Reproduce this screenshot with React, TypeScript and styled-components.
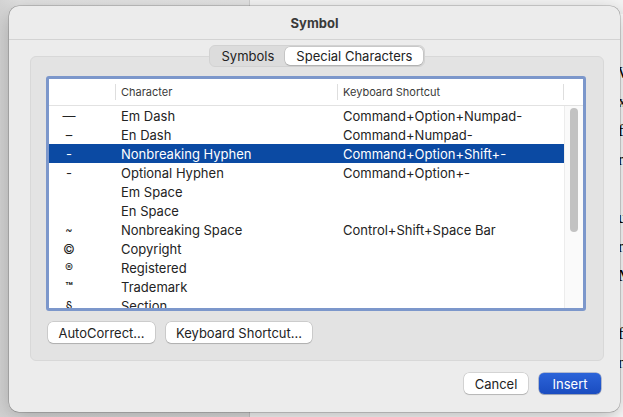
import React from "react";
import styled, { createGlobalStyle, css } from "styled-components";

const Global = createGlobalStyle`
  html, body { margin: 0; padding: 0; }
  body { font-family: Inter, "Noto Sans", "Liberation Sans", sans-serif; -webkit-font-smoothing: antialiased; }
`;

const Desktop = styled.div`
  position: relative;
  width: 623px;
  height: 417px;
  overflow: hidden;
  display: flex;
`;

const LeftPane = styled.div`
  width: 249px;
  background: linear-gradient(90deg, #d4d4d4 0%, #e2e2e2 8%, #e4e4e4 100%);
  border-right: 1px solid #cfcfcf;
`;

const DocPane = styled.div`
  flex: 1;
  background: linear-gradient(180deg, #f4f4f4 0px, #f4f4f4 14px, #ffffff 14px);
  padding: 58px 0 0 368px;
  font-family: "Liberation Serif", serif;
  font-size: 17px;
  line-height: 29px;
  color: #000;
  overflow: hidden;
`;

const DocLine = styled.div`
  white-space: nowrap;
`;

const Dialog = styled.div`
  position: absolute;
  left: 9px;
  top: 6px;
  width: 611px;
  height: 406px;
  box-sizing: border-box;
  background: #ececec;
  border-radius: 10px;
  box-shadow: 0 0 0 0.5px rgba(0, 0, 0, 0.3), 0 6px 20px rgba(0, 0, 0, 0.28);
  display: flex;
  flex-direction: column;
  overflow: hidden;
`;

const TitleBar = styled.div`
  height: 33px;
  flex: none;
  display: flex;
  align-items: center;
  justify-content: center;
  border-bottom: 1px solid #d3d3d3;
  font-size: 13px;
  font-weight: 700;
  color: #3a3a3a;
`;

const Body = styled.div`
  flex: 1;
  display: flex;
  flex-direction: column;
  padding: 5px 16px 0 21px;
`;

const Segmented = styled.div`
  align-self: center;
  display: flex;
  height: 22px;
  box-sizing: border-box;
  padding: 1px;
  background: #dcdcdc;
  border: 1px solid #d2d2d2;
  border-radius: 6px;
  margin-bottom: -11px;
  position: relative;
  z-index: 1;
`;

const Segment = styled.div<{ $active?: boolean }>`
  display: flex;
  align-items: center;
  justify-content: center;
  padding: 0 11px;
  font-size: 13px;
  color: #222;
  border-radius: 5px;
  ${(p) =>
    p.$active &&
    css`
      background: #ffffff;
      box-shadow: 0 0 0 0.5px rgba(0, 0, 0, 0.18), 0 1px 1px rgba(0, 0, 0, 0.12);
    `}
`;

const Panel = styled.div`
  height: 305px;
  box-sizing: border-box;
  background: #e3e3e3;
  border: 1px solid #d8d8d8;
  border-radius: 6px;
  padding: 19px 17px 0 15px;
  display: flex;
  flex-direction: column;
`;

const TableFrame = styled.div`
  height: 235px;
  box-sizing: border-box;
  border: 3px solid #7c97cb;
  border-radius: 3px;
  background: #ffffff;
  display: flex;
  flex-direction: column;
  overflow: hidden;
`;

const Grid = `67px 222px 226px 1fr`;

const HeaderRow = styled.div`
  display: grid;
  grid-template-columns: ${Grid};
  height: 26px;
  flex: none;
  border-bottom: 1px solid #e2e2e2;
  font-size: 11px;
  color: #3a3a3a;
`;

const HeaderCell = styled.div<{ $sep?: boolean }>`
  display: flex;
  align-items: center;
  padding-left: 5px;
  position: relative;
  ${(p) =>
    p.$sep &&
    css`
      &::after {
        content: "";
        position: absolute;
        right: 0;
        top: 5px;
        bottom: 5px;
        width: 1px;
        background: #dedede;
      }
    `}
`;

const TableBody = styled.div`
  flex: 1;
  display: flex;
  min-height: 0;
`;

const Rows = styled.div`
  flex: 1;
  overflow: hidden;
`;

const Row = styled.div<{ $selected?: boolean }>`
  display: grid;
  grid-template-columns: 67px 222px 1fr;
  height: 19px;
  align-items: center;
  font-size: 13px;
  color: ${(p) => (p.$selected ? "#ffffff" : "#232323")};
  background: ${(p) => (p.$selected ? "#0b4aa3" : "transparent")};
`;

const SymCell = styled.div<{ $size?: number; $bold?: boolean }>`
  text-align: center;
  padding-right: 27px;
  font-size: ${(p) => p.$size ?? 13}px;
  font-weight: ${(p) => (p.$bold ? 700 : 400)};
`;

const TextCell = styled.div`
  padding-left: 5px;
  white-space: nowrap;
`;

const ScrollTrack = styled.div`
  width: 18px;
  flex: none;
  border-left: 1px solid #ececec;
  background: #fafafa;
  padding-top: 2px;
  display: flex;
  justify-content: center;
`;

const ScrollThumb = styled.div`
  width: 8px;
  height: 124px;
  border-radius: 4px;
  background: #c2c2c2;
`;

const ButtonRow = styled.div<{ $end?: boolean }>`
  display: flex;
  gap: 11px;
  justify-content: ${(p) => (p.$end ? "flex-end" : "flex-start")};
`;

const PanelButtons = styled(ButtonRow)`
  margin-top: 11px;
  padding-left: 2px;
`;

const FooterButtons = styled(ButtonRow)`
  margin-top: 12px;
  padding-right: 3px;
`;

const Button = styled.button<{ $primary?: boolean; $w?: number }>`
  height: 21px;
  width: ${(p) => (p.$w ? `${p.$w}px` : "auto")};
  padding: 0 ${(p) => (p.$w ? 0 : 10)}px;
  border: none;
  border-radius: 5px;
  font-family: inherit;
  font-size: 13px;
  display: flex;
  align-items: center;
  justify-content: center;
  ${(p) =>
    p.$primary
      ? css`
          color: #ffffff;
          background: linear-gradient(180deg, #2c64d9 0%, #1a4cc0 100%);
          box-shadow: 0 0 0 0.5px rgba(10, 40, 120, 0.5), 0 1px 1px rgba(0, 0, 0, 0.15);
        `
      : css`
          color: #232323;
          background: #ffffff;
          box-shadow: 0 0 0 0.5px rgba(0, 0, 0, 0.2), 0 1px 1px rgba(0, 0, 0, 0.14);
        `}
`;

type Item = { sym: string; name: string; keys?: string; size?: number; bold?: boolean; selected?: boolean };

const items: Item[] = [
  { sym: "—", name: "Em Dash", keys: "Command+Option+Numpad-" },
  { sym: "–", name: "En Dash", keys: "Command+Numpad-" },
  { sym: "-", name: "Nonbreaking Hyphen", keys: "Command+Option+Shift+-", selected: true },
  { sym: "-", name: "Optional Hyphen", keys: "Command+Option+-" },
  { sym: "", name: "Em Space" },
  { sym: "", name: "En Space" },
  { sym: "~", name: "Nonbreaking Space", keys: "Control+Shift+Space Bar", size: 11 },
  { sym: "©", name: "Copyright", size: 13 },
  { sym: "®", name: "Registered", size: 12 },
  { sym: "™", name: "Trademark", size: 12, bold: true },
  { sym: "§", name: "Section", size: 12 },
];

const docLines = ["W", "x", "f", "r", "", "u", "r", "M", "", "f", "n", "", "r"];

export default function App() {
  return (
    <>
      <Global />
      <Desktop>
        <LeftPane />
        <DocPane>
          {docLines.map((l, i) => (
            <DocLine key={i}>{l || "\u00a0"}</DocLine>
          ))}
        </DocPane>
        <Dialog>
          <TitleBar>Symbol</TitleBar>
          <Body>
            <Segmented>
              <Segment>Symbols</Segment>
              <Segment $active>Special Characters</Segment>
            </Segmented>
            <Panel>
              <TableFrame>
                <HeaderRow>
                  <HeaderCell $sep />
                  <HeaderCell $sep>Character</HeaderCell>
                  <HeaderCell $sep>Keyboard Shortcut</HeaderCell>
                  <HeaderCell />
                </HeaderRow>
                <TableBody>
                  <Rows>
                    {items.map((it, i) => (
                      <Row key={i} $selected={it.selected}>
                        <SymCell $size={it.size} $bold={it.bold}>
                          {it.sym}
                        </SymCell>
                        <TextCell>{it.name}</TextCell>
                        <TextCell>{it.keys ?? ""}</TextCell>
                      </Row>
                    ))}
                  </Rows>
                  <ScrollTrack>
                    <ScrollThumb />
                  </ScrollTrack>
                </TableBody>
              </TableFrame>
              <PanelButtons>
                <Button $w={107}>AutoCorrect...</Button>
                <Button $w={146}>Keyboard Shortcut...</Button>
              </PanelButtons>
            </Panel>
            <FooterButtons $end>
              <Button $w={64}>Cancel</Button>
              <Button $w={62} $primary>
                Insert
              </Button>
            </FooterButtons>
          </Body>
        </Dialog>
      </Desktop>
    </>
  );
}
